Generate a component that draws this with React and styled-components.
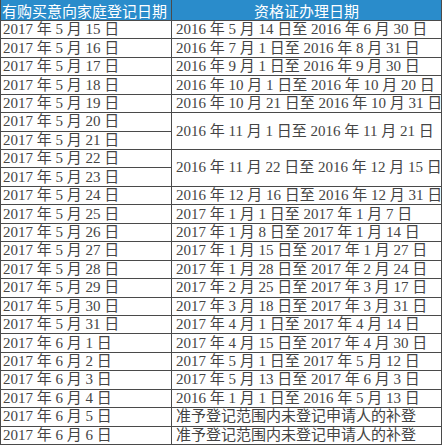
import { Fragment } from "react";
import styled, { createGlobalStyle } from "styled-components";

const GlobalStyle = createGlobalStyle`
    html, body {
        margin: 0;
        padding: 0;
        background: #ffffff;
    }
`;

const Table = styled.div`
    display: grid;
    grid-template-columns: 170px 1fr;
    grid-template-rows: 20px repeat(23, 1fr);
    gap: 1px;
    width: 442px;
    height: 445px;
    box-sizing: border-box;
    background-color: #4a4a4a;
    border-left: 1px solid #4a4a4a;
    border-right: 1px solid #4a4a4a;
    border-bottom: 1px solid #4a4a4a;
`;

const HeadCell = styled.div`
    display: flex;
    align-items: center;
    justify-content: ${(p) => (p.$center ? "center" : "flex-start")};
    background-color: #2a8ccb;
    color: #ffffff;
    font-family: "Noto Sans CJK SC", sans-serif;
    font-size: 15px;
    line-height: 1;
    padding-left: ${(p) => (p.$center ? "0" : "1px")};
    white-space: nowrap;
    overflow: hidden;
`;

const Cell = styled.div`
    display: flex;
    align-items: center;
    background-color: #ffffff;
    color: #444444;
    font-family: "Liberation Serif", "Noto Sans CJK SC", serif;
    font-size: 15px;
    font-weight: 400;
    line-height: 1;
    padding-left: ${(p) => (p.$right ? "4px" : "2px")};
    white-space: nowrap;
    overflow: hidden;
    grid-column: ${(p) => (p.$right ? 2 : 1)};
    grid-row: ${(p) => (p.$span ? `span ${p.$span}` : "auto")};
`;

const BUDGET = "准予登记范围内未登记申请人的补登";

const rows = [
    ["2017 年 5 月 15 日", "2016 年 5 月 14 日至 2016 年 6 月 30 日"],
    ["2017 年 5 月 16 日", "2016 年 7 月 1 日至 2016 年 8 月 31 日"],
    ["2017 年 5 月 17 日", "2016 年 9 月 1 日至 2016 年 9 月 30 日"],
    ["2017 年 5 月 18 日", "2016 年 10 月 1 日至 2016 年 10 月 20 日"],
    ["2017 年 5 月 19 日", "2016 年 10 月 21 日至 2016 年 10 月 31 日"],
    ["2017 年 5 月 20 日", "2016 年 11 月 1 日至 2016 年 11 月 21 日", 2],
    ["2017 年 5 月 21 日", null],
    ["2017 年 5 月 22 日", "2016 年 11 月 22 日至 2016 年 12 月 15 日", 2],
    ["2017 年 5 月 23 日", null],
    ["2017 年 5 月 24 日", "2016 年 12 月 16 日至 2016 年 12 月 31 日"],
    ["2017 年 5 月 25 日", "2017 年 1 月 1 日至 2017 年 1 月 7 日"],
    ["2017 年 5 月 26 日", "2017 年 1 月 8 日至 2017 年 1 月 14 日"],
    ["2017 年 5 月 27 日", "2017 年 1 月 15 日至 2017 年 1 月 27 日"],
    ["2017 年 5 月 28 日", "2017 年 1 月 28 日至 2017 年 2 月 24 日"],
    ["2017 年 5 月 29 日", "2017 年 2 月 25 日至 2017 年 3 月 17 日"],
    ["2017 年 5 月 30 日", "2017 年 3 月 18 日至 2017 年 3 月 31 日"],
    ["2017 年 5 月 31 日", "2017 年 4 月 1 日至 2017 年 4 月 14 日"],
    ["2017 年 6 月 1 日", "2017 年 4 月 15 日至 2017 年 4 月 30 日"],
    ["2017 年 6 月 2 日", "2017 年 5 月 1 日至 2017 年 5 月 12 日"],
    ["2017 年 6 月 3 日", "2017 年 5 月 13 日至 2017 年 6 月 3 日"],
    ["2017 年 6 月 4 日", "2016 年 1 月 1 日至 2016 年 5 月 13 日"],
    ["2017 年 6 月 5 日", BUDGET],
    ["2017 年 6 月 6 日", BUDGET],
];

const App = () => {
    return (
        <>
            <GlobalStyle />
            <Table>
                <HeadCell>有购买意向家庭登记日期</HeadCell>
                <HeadCell $center>资格证办理日期</HeadCell>
                {rows.map(([day, period, span], i) => (
                    <Fragment key={i}>
                        <Cell>{day}</Cell>
                        {period && (
                            <Cell $right $span={span}>
                                {period}
                            </Cell>
                        )}
                    </Fragment>
                ))}
            </Table>
        </>
    );
};

export default App;
